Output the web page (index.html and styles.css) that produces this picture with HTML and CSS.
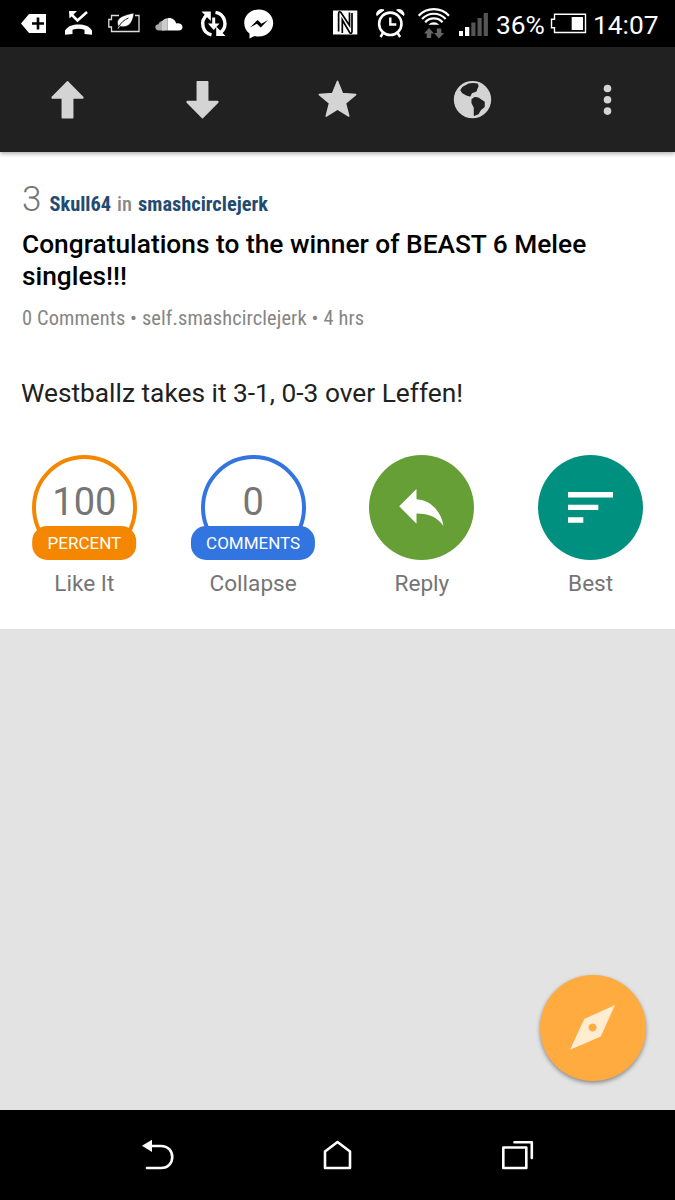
FILE: index.html
```
<!DOCTYPE html>
<html lang="en">
<head>
  <meta charset="UTF-8">
  <title>smashcirclejerk</title>
  <link rel="stylesheet" href="styles.css">
</head>
<body>
  <!-- Status bar -->
  <div class="status-bar">
    <div class="notifications">
      <svg width="45" height="47" viewBox="12 0 45 47">
        <path fill="#fff" d="M21 23.500l8-9.500h17v19H29z"/>
        <path stroke="#000" stroke-width="2.600" d="M38 17.500v12M32 23.500h12"/>
      </svg>
      <svg width="45" height="47" viewBox="57 0 45 47">
        <path fill="none" stroke="#fff" stroke-width="2.600" d="M71 14l6.500 6.500 9.500-8.500"/>
        <path fill="#fff" d="M69 11h8l-7.500 7.500z"/>
        <path fill="#fff" d="M65 34.800v-4.300c3-4.500 8-6 13.500-6s11 1.500 13.500 6v4.300l-7.500-.8v-4.200c-4-1.500-8-1.500-12 0V34z"/>
      </svg>
      <svg width="45" height="47" viewBox="102 0 45 47">
        <path fill="none" stroke="#ddd" stroke-width="1.300" d="M119 15.500h-7.500v4h-2.700v7.500h2.700v4.500h27.500v-16h-4"/>
        <path fill="#fff" stroke="#000" stroke-width=".6" d="M118.500 26.500c-3.500-8 3-11 15.500-13.500-1 9-5 15.500-14 13.500l-1.500 2.500h-1.300z"/>
        <path fill="none" stroke="#000" stroke-width=".9" d="M119 26.500c2-4 5-6.500 9.500-8.500"/>
      </svg>
      <svg width="45" height="47" viewBox="147 0 45 47">
        <path fill="#aaa" d="M159 30.500c-2 0-3.700-1.400-3.700-3.200s1.500-3 3.200-3c.3-2 2-3.300 4-3.300l2.500.3v9.200z"/>
        <path fill="#ccc" d="M162 21.200c1.500-1.800 3.500-3 5.500-3v12.300H162z"/>
        <path fill="#fff" d="M167.500 18.200c4-.8 7.800 1.400 8.700 5.300 3.300-.8 6.300 1 6.300 3.700 0 2-1.700 3.300-3.700 3.300h-11.300z"/>
      </svg>
      <svg width="45" height="47" viewBox="192 0 45 47">
        <path fill="none" stroke="#fff" stroke-width="3.400" d="M211.500 34.800c-9-1.800-12-13.500-4.500-20M215.500 12.400c9.500 1.600 13 13.600 5 20.300"/>
        <path fill="#fff" d="M201.500 11.500h9.300v9.500zM225.500 36h-9.300v-9.500zM212.200 17.500h3v6h4.300l-5.800 6.500-5.800-6.500h4.300z"/>
      </svg>
      <svg width="45" height="47" viewBox="237 0 45 47">
        <path fill="#fff" d="M258.700 9.500c8.300 0 14.500 6 14.500 13.500s-6.200 13.500-14.500 13.500c-1.500 0-2.900-.2-4.200-.6l-5 2.600v-5c-3.300-2.500-5.300-6.200-5.300-10.500 0-7.500 6.200-13.500 14.500-13.500z"/>
        <path fill="#000" d="M250 27.500l7.500-7.500 4 3.800 6.500-3.800-7.200 7.500-4-3.800z"/>
      </svg>
    </div>
    <div class="system">
      <svg width="45" height="47" viewBox="323 0 45 47">
        <path fill="#fff" d="M333 10.500h24.300v24H333z"/>
        <path fill="none" stroke="#000" stroke-width="1.700" d="M338.600 31.500V13.500q.3-3 2.500-.8L349.500 25.500V12.500M352 13v18.500q-.3 3-2.500.8L342.300 20v13"/>
      </svg>
      <svg width="44" height="47" viewBox="368 0 44 47">
        <circle cx="390.300" cy="23.800" r="11.200" fill="none" stroke="#fff" stroke-width="2.600"/>
        <path fill="none" stroke="#fff" stroke-width="2.400" d="M390.300 17.500v7h6M383 33l-2.500 4M397.600 33l2.500 4"/>
        <path fill="#fff" stroke="#fff" d="M376.800 15.500c-1-4 3-7 7.200-5.500zM403.800 15.500c1-4-3-7-7.200-5.500z"/>
      </svg>
      <svg width="43" height="47" viewBox="412 0 43 47">
        <g fill="none" stroke="#fff" stroke-width="2.200">
          <path d="M418.700 15.800c8-8.800 22.300-8.800 30.300 0"/>
          <path d="M422 19c6.500-7 17.200-7 23.700 0"/>
          <path d="M425.200 22.200c4.700-5 12.600-5 17.300 0"/>
        </g>
        <path fill="#fff" d="M428.300 24.800c3.500-3.300 7.500-3.300 11 0z"/>
        <path fill="#666" d="M429 28l5 5.500h-2.800v4.500h-4.500v-4.500H424zM439 38.500l-5-5.500h2.800v-4.500h4.500V33h2.800z"/>
      </svg>
      <svg width="38" height="47" viewBox="455 0 38 47">
        <path fill="#fff" d="M459 31h4v5h-4zM465 27h4.300v9H465z"/>
        <path fill="#555" d="M471.300 22.500h4.200V36h-4.200zM477.500 18h4.200v18h-4.200zM483.700 13h4.200v23h-4.200z"/>
      </svg>
      <span class="battery-level">36%</span>
      <svg width="40" height="47" viewBox="549 0 40 47">
        <path fill="none" stroke="#fff" stroke-width="1.400" d="M554.500 14.200h31v18.300h-31v-4.800h-3v-8.500h3z"/>
        <path fill="#fff" d="M571.700 17H583v13h-11.300z"/>
      </svg>
      <span class="clock">14:07</span>
    </div>
  </div>

  <!-- Toolbar -->
  <div class="toolbar">
    <svg viewBox="0 0 46 46">
      <path d="M23 4.700l15.300 15.500v.8H28.200v19.700H17.800V21H7.700v-.8z"/>
    </svg>
    <svg viewBox="0 0 46 46">
      <path d="M23 40.700l15.300-15.500v-.8H28.200V4.700H17.800v19.700H7.700v.8z"/>
    </svg>
    <svg viewBox="0 0 46 46">
      <path d="M23 4.300l5 12.300 13.200 1-10.200 8.500 3.300 13L23 32l-11.300 7.100 3.300-13L4.800 17.600l13.200-1z"/>
    </svg>
    <svg viewBox="0 0 46 46">
      <circle cx="23" cy="22.600" r="18.700"/>
      <path class="land" d="M11.600 13.200l1.900-2.800 5.500-3.100c3-.6 6-.6 8.800 0l.5 2-2 4.700-4.300 1.500-1.700 3.300-3.100-.9-4-2.200zM22.700 22.700l2.800-2 3.300.6 5.700 3.800v4.500l-3.400 2.700-2.600 4.200-3.500 1.700V30.500l-2.300-4.500z"/>
    </svg>
    <svg viewBox="0 0 46 46">
      <circle cx="23" cy="11.500" r="3.800"/>
      <circle cx="23" cy="22.800" r="3.800"/>
      <circle cx="23" cy="34.100" r="3.800"/>
    </svg>
  </div>

  <!-- Post -->
  <div class="post">
    <div class="byline"><span class="score">3</span><b>Skull64</b><i>in</i><b>smashcirclejerk</b></div>
    <h1>Congratulations to the winner of BEAST 6 Melee singles!!!</h1>
    <p class="meta">0 Comments • self.smashcirclejerk • 4 hrs</p>
    <p class="text">Westballz takes it 3-1, 0-3 over Leffen!</p>

    <div class="actions">
      <div class="action">
        <div class="circle percent">100<span class="pill">PERCENT</span></div>
        <span class="label">Like It</span>
      </div>
      <div class="action">
        <div class="circle comments">0<span class="pill">COMMENTS</span></div>
        <span class="label">Collapse</span>
      </div>
      <div class="action">
        <div class="circle reply">
          <svg width="105" height="105" viewBox="0 0 105 105">
            <path fill="#fff" d="M47.500 34v10.200c15 1 25 13 27 26.800-6-8.500-14-12.500-27-12.500v10.200L30.200 51.300z"/>
          </svg>
        </div>
        <span class="label">Reply</span>
      </div>
      <div class="action">
        <div class="circle best">
          <svg width="105" height="105" viewBox="0 0 105 105">
            <path fill="#fff" d="M30 37h45v5.500H30zM30 49.700h30.300v5.300H30zM30 62.300h15.300v5.400H30z"/>
          </svg>
        </div>
        <span class="label">Best</span>
      </div>
    </div>
  </div>

  <div class="fab">
    <svg width="106" height="106" viewBox="0 0 106 106">
      <path fill="#ffecd1" fill-rule="evenodd" d="M75 30L60.800 61.500 30 74.800 44.200 44zM52.500 48.500a4 4 0 1 0 .01 0z"/>
    </svg>
  </div>

  <!-- Navigation bar -->
  <div class="nav-bar">
    <svg width="180" height="90" viewBox="68 0 180 90">
      <path d="M149 36h12c15 0 15 22 0 22h-14"/>
      <path class="head" d="M142 35.700l10-6v12.300z"/>
    </svg>
    <svg width="180" height="90" viewBox="248 0 180 90">
      <path d="M325 58V41.500l12.500-9.500L350 41.500V58z"/>
    </svg>
    <svg width="180" height="90" viewBox="428 0 180 90">
      <path d="M503.300 37.500h23V58h-23zM514.500 32.200h17.300V48"/>
    </svg>
  </div>
</body>
</html>
```
FILE: styles.css
```
body {
  margin: 0;
  height: 1200px;
  display: flex;
  flex-direction: column;
  background-color: #e3e3e3;
  font-family: Roboto, sans-serif;
  overflow: hidden;
}

svg {
  display: block;
  flex: none;
}

.status-bar {
  height: 47px;
  display: flex;
  justify-content: space-between;
  background-color: #000;
  color: #fff;
  font-size: 26.3px;
  line-height: 50px;
  padding: 0 12px;
}

.notifications, .system {
  display: flex;
}

.system {
  width: 340px;
}

.battery-level {
  width: 53px;
  margin-left: 3px;
}

.clock {
  margin-left: 4px;
}

.toolbar {
  height: 105px;
  display: flex;
  align-items: center;
  background-color: #212121;
  box-shadow: 0 2px 4px rgba(0, 0, 0, 0.3);
  z-index: 1;
}

.toolbar svg {
  flex: 1;
  height: 46px;
  fill: #d4d4d4;
  stroke: #d4d4d4;
  stroke-width: 1.5px;
  stroke-linejoin: round;
}

.toolbar circle {
  stroke: none;
}

.toolbar .land {
  fill: #212121;
  stroke: #212121;
}

.post {
  height: 477px;
  box-sizing: border-box;
  padding: 26px 0 0;
  background-color: #fff;
}

.byline {
  height: 50px;
  margin-left: 22px;
  line-height: 44px;
  font-family: "Roboto Condensed", Roboto, sans-serif;
  font-stretch: 75%;
  font-size: 20.4px;
  font-weight: 600;
  color: #888;
}

.byline b {
  font-weight: 700;
  color: #234a70;
}

.byline i {
  margin: 0 6px;
  font-style: normal;
  font-weight: 500;
}

.score {
  margin-right: 8px;
  font-family: Roboto, sans-serif;
  font-stretch: 100%;
  font-weight: 300;
  font-size: 35px;
  color: #757575;
}

h1 {
  margin: 0 22px;
  font-size: 26.3px;
  font-weight: 500;
  line-height: 32px;
  color: #000;
}

.meta {
  margin: 14px 22px 0;
  font-family: "Roboto Condensed", Roboto, sans-serif;
  font-stretch: 75%;
  font-size: 20.4px;
  letter-spacing: 0.13px;
  line-height: 24px;
  color: #858585;
}

.text {
  margin: 47px 21px 0;
  font-size: 26.3px;
  line-height: 32px;
  color: #212121;
}

.actions {
  display: flex;
  margin-top: 46px;
}

.action {
  flex: 1;
  display: flex;
  flex-direction: column;
  align-items: center;
}

.circle {
  position: relative;
  box-sizing: border-box;
  width: 105px;
  height: 105px;
  border-radius: 50%;
  text-align: center;
  font-size: 38px;
  line-height: 86px;
  color: #757575;
}

.percent { border: 4px solid #f58700; }
.comments { border: 4px solid #3375e0; }
.reply { background-color: #659f35; }
.best { background-color: #009080; }

.pill {
  position: absolute;
  left: 50%;
  bottom: -4px;
  transform: translateX(-50%);
  padding: 0 15px;
  height: 34px;
  border-radius: 15px;
  font-size: 17px;
  line-height: 35px;
  color: #fff;
}

.percent .pill { background-color: #f58700; }
.comments .pill { background-color: #3375e0; }

.label {
  margin-top: 9px;
  font-size: 22.6px;
  line-height: 30px;
  color: #757575;
}

.fab {
  width: 106px;
  height: 106px;
  margin: auto 29px 29px auto;
  border-radius: 50%;
  background-color: #ffab40;
  box-shadow: 0 2px 4px rgba(0, 0, 0, 0.4);
}

.nav-bar {
  height: 90px;
  display: flex;
  justify-content: center;
  background-color: #000;
}

.nav-bar path {
  fill: none;
  stroke: #fff;
  stroke-width: 2.6px;
  stroke-linecap: round;
  stroke-linejoin: round;
}

.nav-bar .head {
  fill: #fff;
  stroke: none;
}
```
